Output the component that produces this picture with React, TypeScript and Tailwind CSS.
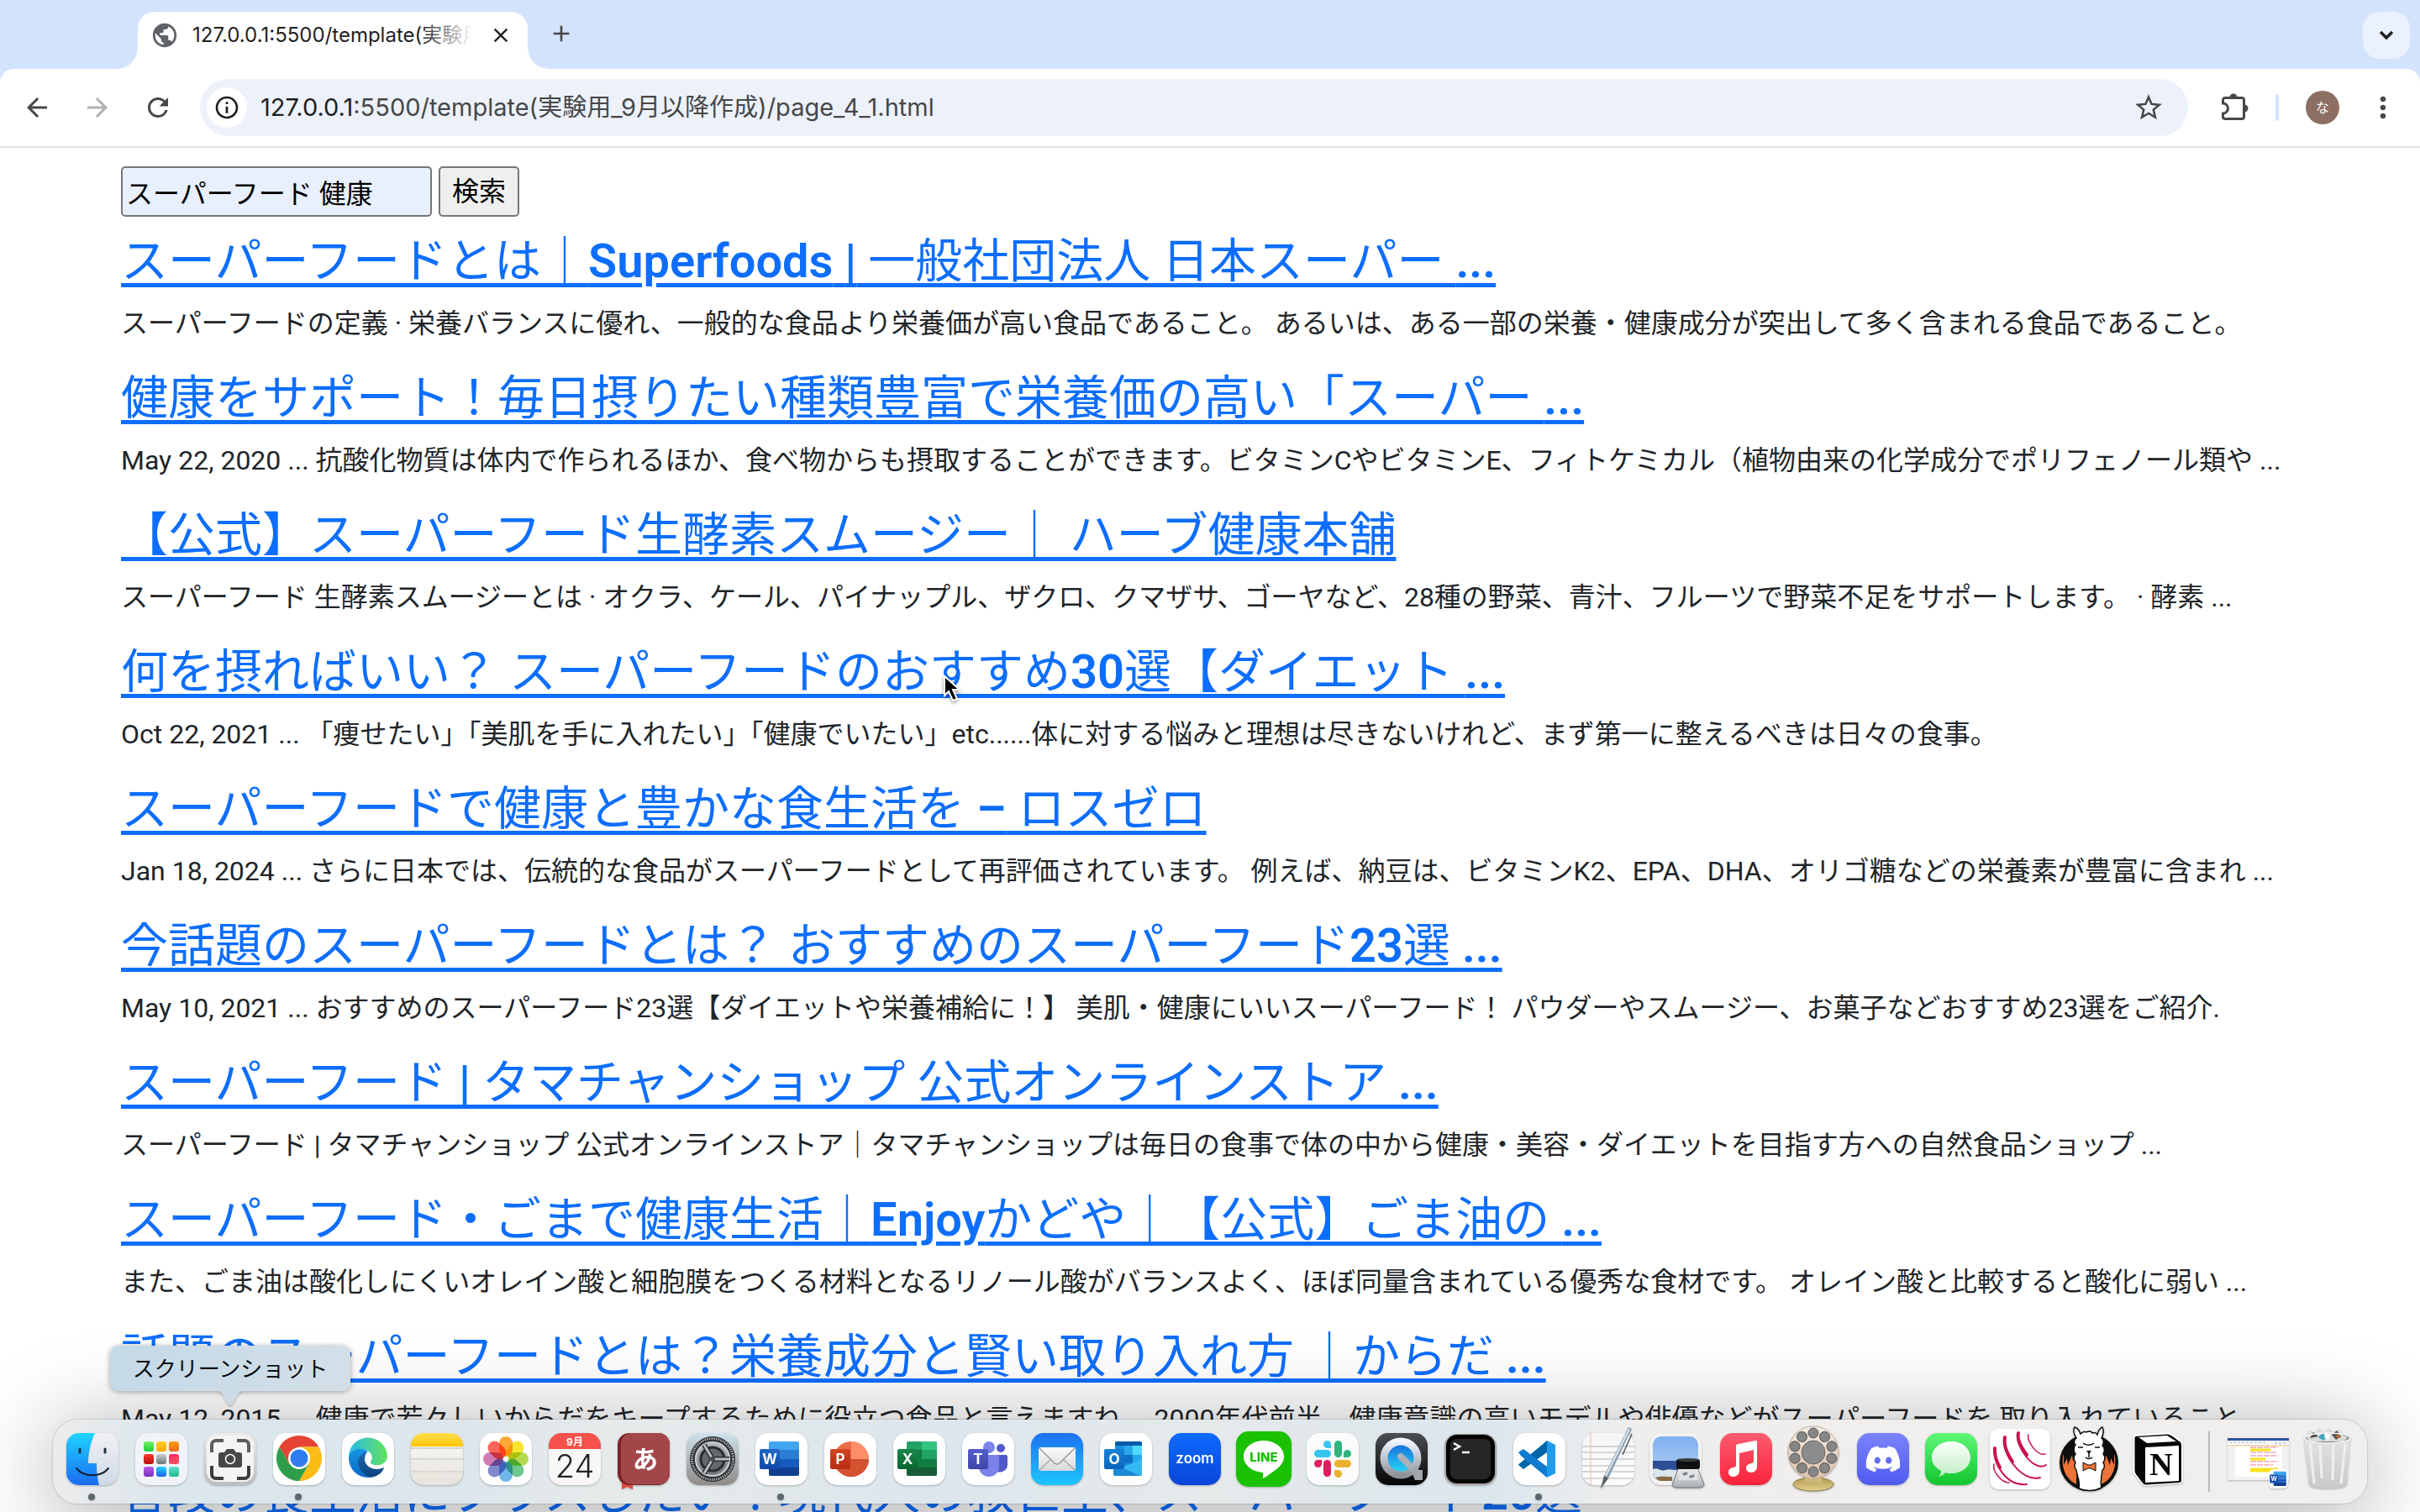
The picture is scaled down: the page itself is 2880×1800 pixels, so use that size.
import React from "react";
import {
  MdAdd,
  MdArrowBack,
  MdArrowForward,
  MdClose,
  MdInfoOutline,
  MdMoreVert,
  MdPublic,
  MdRefresh,
  MdStarOutline,
} from "react-icons/md";
import { FaDiscord } from "react-icons/fa";

const results = [
  {
    title: "スーパーフードとは｜Superfoods | 一般社団法人 日本スーパー ...",
    text: "スーパーフードの定義 · 栄養バランスに優れ、一般的な食品より栄養価が高い食品であること。 あるいは、ある一部の栄養・健康成分が突出して多く含まれる食品であること。",
  },
  {
    title: "健康をサポート！毎日摂りたい種類豊富で栄養価の高い「スーパー ...",
    text: "May 22, 2020 ... 抗酸化物質は体内で作られるほか、食べ物からも摂取することができます。ビタミンCやビタミンE、フィトケミカル（植物由来の化学成分でポリフェノール類や ...",
  },
  {
    title: "【公式】スーパーフード生酵素スムージー｜ ハーブ健康本舗",
    text: "スーパーフード 生酵素スムージーとは · オクラ、ケール、パイナップル、ザクロ、クマザサ、ゴーヤなど、28種の野菜、青汁、フルーツで野菜不足をサポートします。 · 酵素 ...",
  },
  {
    title: "何を摂ればいい？ スーパーフードのおすすめ30選【ダイエット ...",
    text: "Oct 22, 2021 ... 「痩せたい」「美肌を手に入れたい」「健康でいたい」etc......体に対する悩みと理想は尽きないけれど、まず第一に整えるべきは日々の食事。",
  },
  {
    title: "スーパーフードで健康と豊かな食生活を – ロスゼロ",
    text: "Jan 18, 2024 ... さらに日本では、伝統的な食品がスーパーフードとして再評価されています。 例えば、納豆は、ビタミンK2、EPA、DHA、オリゴ糖などの栄養素が豊富に含まれ ...",
  },
  {
    title: "今話題のスーパーフードとは？ おすすめのスーパーフード23選 ...",
    text: "May 10, 2021 ... おすすめのスーパーフード23選【ダイエットや栄養補給に！】 美肌・健康にいいスーパーフード！ パウダーやスムージー、お菓子などおすすめ23選をご紹介.",
  },
  {
    title: "スーパーフード | タマチャンショップ 公式オンラインストア ...",
    text: "スーパーフード | タマチャンショップ 公式オンラインストア｜タマチャンショップは毎日の食事で体の中から健康・美容・ダイエットを目指す方への自然食品ショップ ...",
  },
  {
    title: "スーパーフード・ごまで健康生活｜Enjoyかどや｜【公式】ごま油の ...",
    text: "また、ごま油は酸化しにくいオレイン酸と細胞膜をつくる材料となるリノール酸がバランスよく、ほぼ同量含まれている優秀な食材です。 オレイン酸と比較すると酸化に弱い ...",
  },
  {
    title: "話題のスーパーフードとは？栄養成分と賢い取り入れ方 ｜からだ ...",
    text: "May 12, 2015 ... 健康で若々しいからだをキープするために役立つ食品と言えますね。 2000年代前半、健康意識の高いモデルや俳優などがスーパーフードを 取り入れていること",
  },
  {
    title: "普段の食生活にプラスしたい！現代人の救世主、スーパーフード20選",
    text: "",
  },
];

/* Latin runs of a heading are set heavier than the Japanese around them. */
function HeadingText({ text }: { text: string }) {
  return (
    <>
      {text.split(/([A-Za-z0-9|.–]+)/).map((part, i) =>
        i % 2 ? (
          <span key={i} className="font-semibold">{part}</span>
        ) : (
          part
        ),
      )}
    </>
  );
}

/* ---------- drawing helpers for the dock ---------- */

function Grad({ id, a, b, h }: { id: string; a: string; b: string; h?: boolean }) {
  return (
    <linearGradient id={id} x1="0" y1="0" x2={h ? "1" : "0"} y2={h ? "0" : "1"}>
      <stop offset="0" stopColor={a} />
      <stop offset="1" stopColor={b} />
    </linearGradient>
  );
}

function Tile({ fill = "#fff" }: { fill?: string }) {
  return <rect x="10" y="16" width="62" height="62" rx="15" fill={fill} />;
}

function Label({
  x,
  y,
  size,
  children,
  fill = "#fff",
  weight = 700,
  family = "Inter, 'Noto Sans CJK JP', sans-serif",
}: {
  x: number;
  y: number;
  size: number;
  children: React.ReactNode;
  fill?: string;
  weight?: number;
  family?: string;
}) {
  return (
    <text x={x} y={y} fontSize={size} fill={fill} fontWeight={weight} fontFamily={family} textAnchor="middle">
      {children}
    </text>
  );
}

const Finder = () => (
  <>
    <Grad id="fi1" a="#1fd3ff" b="#1b6cf2" />
    <Grad id="fi2" a="#f1f1f4" b="#cfd9e6" />
    <clipPath id="fic">
      <rect x="10" y="16" width="62" height="62" rx="15" />
    </clipPath>
    <Tile fill="url(#fi2)" />
    <path clipPath="url(#fic)" d="M10 16H44C39 27 36 40 36 52H46C46 62 47 71 49 78H10Z" fill="url(#fi1)" />
    <path d="M26 35v4M56 35v4" stroke="#22303f" strokeWidth="3" strokeLinecap="round" />
    <path d="M22 58c9 11 29 11 38 0" fill="none" stroke="#16202c" strokeWidth="2" strokeLinecap="round" />
  </>
);

const padColors = [
  ["#7bf06a", "#17cf3a"], ["#ffd21f", "#fda50b"], ["#ff9f0a", "#ea6a22"],
  ["#fb3a30", "#b80f0f"], ["#c8d2d8", "#6c7276"], ["#ff2d6b", "#f9505c"],
  ["#bb5ae8", "#7b2fb8"], ["#1fd6ff", "#1d62ee"], ["#5ee0d2", "#23b98a"],
];
const Launchpad = () => (
  <>
    <Tile fill="#f0f4f8" />
    {padColors.map(([a, b], i) => (
      <g key={i}>
        <Grad id={`lp${i}`} a={a} b={b} />
        <rect x={20 + (i % 3) * 15} y={26 + Math.floor(i / 3) * 15} width="12" height="12" rx="3" fill={`url(#lp${i})`} />
      </g>
    ))}
  </>
);

const Screenshot = () => (
  <>
    <Grad id="ss1" a="#ececec" b="#bdbdbd" />
    <Tile fill="url(#ss1)" />
    <rect x="13" y="19" width="56" height="55" rx="12" fill="#f4f4f4" />
    <g fill="none" stroke="#3c3c3c" strokeWidth="4">
      <path d="M19 39v-9a5 5 0 0 1 5-5h9M49 25h9a5 5 0 0 1 5 5v9" stroke="#5c5c5c" />
      <path d="M19 55v10a5 5 0 0 0 5 5h9M49 70h9a5 5 0 0 0 5-5v-10" />
    </g>
    <path d="M30 39h4l3-4h8l3 4h4a3 3 0 0 1 3 3v12a3 3 0 0 1-3 3h-22a3 3 0 0 1-3-3v-12a3 3 0 0 1 3-3z" fill="#474747" />
    <circle cx="41" cy="47" r="5.5" fill="#474747" stroke="#fff" strokeWidth="1.5" />
  </>
);

const Chrome = () => (
  <>
    <Tile />
    <g transform="translate(41 46)">
      <path d="M-23.4-13.5A27 27 0 0 1 23.4-13.5H0L-11.7 6.75Z" fill="#e54335" />
      <path d="M23.4-13.5A27 27 0 0 1 0 27L11.7 6.75L0-13.5Z" fill="#fbbc15" />
      <path d="M0 27A27 27 0 0 1-23.4-13.5L-11.7 6.75L11.7 6.75Z" fill="#2e9e4b" />
      <circle r="13" fill="#fff" />
      <circle r="10.5" fill="#2f7bf0" />
    </g>
  </>
);

const Edge = () => (
  <>
    <Grad id="ed1" a="#2bb9ea" b="#62e35c" h />
    <Grad id="ed2" a="#1497e6" b="#0c66c4" />
    <Grad id="ed3" a="#1b6bb0" b="#0b4180" />
    <Tile />
    <path d="M18 46A23 23 0 0 1 64 43c0 8-7 12-13 11-5 0-8-2-7-4 3-4 2-8-1-11-6-6-17-4-25 7z" fill="url(#ed1)" />
    <path d="M18 46C19 36 31 31 41 38C33 42 34 54 42 58C48 61 55 60 60 57C56 65 49 69 41 69A23 23 0 0 1 18 46z" fill="url(#ed2)" />
    <path d="M40 38c-10 3-13 11-10 18 4 9 12 14 18 12 6-2 11-6 12-11-10 5-22 0-23-9 0-4 1-7 3-10z" fill="url(#ed3)" />
  </>
);

const Notes = () => (
  <>
    <Grad id="no1" a="#f9f9f8" b="#e7e3dc" />
    <Grad id="no2" a="#fedf52" b="#fdc406" />
    <clipPath id="noc">
      <rect x="10" y="16" width="62" height="62" rx="15" />
    </clipPath>
    <g clipPath="url(#noc)">
      <rect x="10" y="16" width="62" height="62" fill="url(#no1)" />
      <rect x="10" y="16" width="62" height="16" fill="url(#no2)" />
      <path d="M10 34H72" stroke="#b9b5ab" strokeWidth="2" strokeDasharray="1 1" />
      <path d="M10 47H72M10 62H72" stroke="#d9d8d6" strokeWidth="2" />
    </g>
  </>
);

const petals = ["#ff9a18", "#f5e00a", "#a3d32f", "#55bd7b", "#55a9e8", "#6a74c4", "#c565a8", "#fb4a3e"];
const Photos = () => (
  <>
    <Tile />
    {petals.map((c, i) => (
      <rect key={c} x="33" y="20" width="16" height="24" rx="8" fill={c} opacity="0.85" className="mix-blend-multiply" transform={`rotate(${i * 45} 41 47)`} />
    ))}
  </>
);

const Calendar = () => (
  <>
    <Tile fill="#f8f7f6" />
    <path d="M10 35V31A15 15 0 0 1 25 16H57A15 15 0 0 1 72 31V35Z" fill="#f6514b" />
    <Label x={41} y={31} size={12}>9月</Label>
    <Label x={41} y={69} size={38} fill="#222" weight={300}>24</Label>
  </>
);

const Dictionary = () => (
  <>
    <path d="M15 74h13v9l-6.500-3-6.500 3z" fill="#e0483e" />
    <rect x="10" y="16" width="62" height="62" rx="14" fill="#7c2526" />
    <rect x="14" y="16" width="58" height="61" rx="13" fill="#a3464a" />
    <Label x={43} y={58} size={30} weight={600} family="'Noto Sans CJK JP', sans-serif">あ</Label>
  </>
);

const Settings = () => (
  <>
    <Grad id="se1" a="#cfe2ec" b="#8f8b88" />
    <Grad id="se2" a="#b9bec2" b="#6f7070" />
    <Tile fill="url(#se1)" />
    <circle cx="41" cy="47" r="27" fill="#26282a" />
    <circle cx="41" cy="47" r="24.500" fill="none" stroke="#a8acae" strokeWidth="3" strokeDasharray="1.500 1.200" />
    <circle cx="41" cy="47" r="20" fill="url(#se2)" stroke="#c3c8cb" strokeWidth="2.500" />
    <circle cx="41" cy="47" r="14" fill="#66696b" stroke="#2b2d2f" strokeWidth="3" />
    <path d="M41 47H61M41 47L31 30M41 47L31 64" stroke="#2b2d2f" strokeWidth="6" />
    <path d="M41 47H61M41 47L31 30M41 47L31 64" stroke="#b5bbbe" strokeWidth="3" />
    <circle cx="41" cy="47" r="3" fill="#4a4d4f" />
  </>
);

function OfficeBadge({ id, a, b, x, letter }: { id: string; a: string; b: string; x: number; letter: string }) {
  return (
    <>
      <Grad id={id} a={a} b={b} />
      <rect x={x} y="35" width="24" height="24" rx="2" fill={`url(#${id})`} />
      <Label x={x + 12} y={53} size={17}>{letter}</Label>
    </>
  );
}

const WordArt = () => (
  <>
    <path d="M28 26h32a2 2 0 0 1 2 2v9H26v-9a2 2 0 0 1 2-2z" fill="#41a5ee" />
    <rect x="26" y="36" width="36" height="11" fill="#2b7cd3" />
    <rect x="26" y="47" width="36" height="10" fill="#185abd" />
    <path d="M26 57h36v8a2 2 0 0 1-2 2H28a2 2 0 0 1-2-2z" fill="#103f91" />
  </>
);
const Word = () => (
  <>
    <Tile />
    <WordArt />
    <OfficeBadge id="wd1" a="#2368c4" b="#0f48a8" x={15} letter="W" />
  </>
);

const PowerPoint = () => (
  <>
    <Tile />
    <circle cx="42" cy="47" r="21" fill="#ed6c47" />
    <path d="M42 26a21 21 0 0 1 21 21H42z" fill="#ff8f6b" />
    <path d="M63 47a21 21 0 0 1-42 0z" fill="#d35230" />
    <OfficeBadge id="pp1" a="#d04524" b="#b92b10" x={17} letter="P" />
  </>
);

const Excel = () => (
  <>
    <Tile />
    <rect x="26" y="26" width="36" height="41" rx="2" fill="#21a366" />
    <path d="M44 26h16a2 2 0 0 1 2 2v8H44z" fill="#33c481" />
    <rect x="26" y="36" width="18" height="21" fill="#107c41" />
    <path d="M44 47h18v10H44z" fill="#107c41" />
    <path d="M26 57h36v8a2 2 0 0 1-2 2H28a2 2 0 0 1-2-2z" fill="#185c37" />
    <OfficeBadge id="xl1" a="#18884a" b="#0b6630" x={15} letter="X" />
  </>
);

const Teams = () => (
  <>
    <Tile />
    <circle cx="56" cy="34" r="5" fill="#5059c9" />
    <path d="M48 42h14a2 2 0 0 1 2 2v10a9 9 0 0 1-16 5z" fill="#5059c9" />
    <circle cx="42" cy="33" r="7" fill="#7b83eb" />
    <path d="M30 42h22a2 2 0 0 1 2 2v12a12 12 0 0 1-24 0z" fill="#7b83eb" />
    <OfficeBadge id="te1" a="#5560cc" b="#3d45a8" x={17} letter="T" />
  </>
);

const Mail = () => (
  <>
    <Grad id="ma1" a="#1d72f3" b="#1ec5fd" />
    <Grad id="ma2" a="#fbfbfb" b="#d9d9d9" />
    <Tile fill="url(#ma1)" />
    <rect x="19" y="33" width="44" height="28" rx="3" fill="url(#ma2)" />
    <path d="M20 60l14-13M62 60L48 47" stroke="#a9a9a9" strokeWidth="1.500" />
    <path d="M20 34l17 17c3 3 5 3 8 0l17-17" fill="none" stroke="#9b9b9b" strokeWidth="1.500" />
  </>
);

const Outlook = () => (
  <>
    <Tile />
    <path d="M30 26h28a2 2 0 0 1 2 2v38H28V28a2 2 0 0 1 2-2z" fill="#1490df" />
    <path d="M30 26h28a2 2 0 0 1 2 2v3H28v-3a2 2 0 0 1 2-2z" fill="#0a5ba8" />
    <rect x="39" y="31" width="10" height="11" fill="#28a8ea" />
    <rect x="49" y="31" width="11" height="11" fill="#50d9ff" />
    <rect x="39" y="42" width="10" height="10" fill="#0f6fc6" />
    <rect x="49" y="42" width="11" height="10" fill="#28a8ea" />
    <path d="M26 48l17 8 17-8v17a2 2 0 0 1-2 2H28a2 2 0 0 1-2-2z" fill="#1b8ad6" />
    <path d="M60 47v18a2 2 0 0 1-2 2L36 57z" fill="#35b8f1" />
    <OfficeBadge id="ol1" a="#1784d8" b="#0a63b8" x={15} letter="O" />
  </>
);

const Zoom = () => (
  <>
    <Grad id="zo1" a="#0d6bff" b="#0a45d8" />
    <Tile fill="url(#zo1)" />
    <Label x={41} y={52} size={17} weight={600}>zoom</Label>
  </>
);

const Line = () => (
  <>
    <rect x="8" y="14" width="66" height="66" rx="15" fill="#19c100" />
    <path d="M41 25c14 0 24 9 24 19 0 9-8 15-16 20-3 3-7 5-9 6-1-2 1-4 0-7-13-1-23-9-23-19 0-10 10-19 24-19z" fill="#fff" />
    <Label x={41} y={50} size={15} fill="#19c100" weight={800}>LINE</Label>
  </>
);

const Slack = () => (
  <>
    <Tile fill="#fbfbfc" />
    <g fill="#36c5f0">
      <rect x="19" y="36" width="20" height="9" rx="4.500" />
      <path d="M39 34h-4.500a4.500 4.500 0 1 1 4.500-4.500z" />
    </g>
    <g fill="#2eb67d">
      <rect x="43" y="25" width="9" height="20" rx="4.500" />
      <path d="M54 45v-4.500a4.500 4.500 0 1 1 4.500 4.500z" />
    </g>
    <g fill="#ecb22e">
      <rect x="43" y="48" width="20" height="9" rx="4.500" />
      <path d="M43 60h4.500a4.500 4.500 0 1 1-4.500 4.500z" />
    </g>
    <g fill="#e01e5a">
      <rect x="30" y="48" width="9" height="20" rx="4.500" />
      <path d="M28 48v4.500a4.500 4.500 0 1 1-4.500-4.500z" />
    </g>
  </>
);

const QuickTime = () => (
  <>
    <Grad id="qt1" a="#4b4e52" b="#050505" />
    <Grad id="qt2" a="#1565d8" b="#27e0f8" />
    <Grad id="qt3" a="#eef3ff" b="#8e9499" />
    <Tile fill="url(#qt1)" />
    <circle cx="40" cy="46" r="20" fill="url(#qt2)" stroke="url(#qt3)" strokeWidth="9" />
    <path d="M40 44L58 62" stroke="#a9b0b8" strokeWidth="8" strokeLinecap="round" />
    <path d="M52 60l8-6 1 6h5v12h-9z" fill="#a0a6ac" />
  </>
);

const Terminal = () => (
  <>
    <rect x="10" y="17" width="62" height="61" rx="15" fill="#a9a3a0" />
    <rect x="12" y="18" width="58" height="58" rx="13" fill="#050505" />
    <rect x="17" y="23" width="48" height="48" rx="8" fill="#262626" />
    <path d="M21 28l7 4-7 4M31 39h9" fill="none" stroke="#fff" strokeWidth="2.500" />
  </>
);

const VSCode = () => (
  <>
    <Tile />
    <path d="M50 25V39L22 59L16 54Q17 52 19 51z" fill="#0065a9" />
    <path d="M16 39L22 35L50 56V69L19 43z" fill="#0e7ad0" />
    <path d="M50 25L60 30V64L50 69z" fill="#1f9cf0" />
  </>
);

const TextEdit = () => (
  <>
    <Grad id="tx1" a="#f5f5f5" b="#fdfdfd" />
    <Tile fill="url(#tx1)" />
    <path d="M10 32H72M10 39H72M10 47H72M10 55H72M10 62H72M12 70H70" stroke="#c9c9c9" strokeWidth="1.500" />
    <path d="M20 16V78" stroke="#f3b6b0" strokeWidth="1" />
    <path d="M65 9l4 2-28 59-9 12 4-15z" fill="#8fa3b4" />
    <path d="M66 11l-28 56" stroke="#dbe7ee" strokeWidth="2" />
    <path d="M69 17L58 42" stroke="#4b5a66" strokeWidth="1.500" />
    <path d="M36 67l5 3-9 12z" fill="#5d6063" />
  </>
);

const Preview = () => (
  <>
    <Grad id="pv1" a="#7fb0ef" b="#b7d2f0" />
    <Grad id="pv2" a="#f6f7f8" b="#a7abae" />
    <rect x="8" y="16" width="62" height="62" rx="14" fill="#f2f2f2" />
    <rect x="12" y="20" width="54" height="53" rx="10" fill="url(#pv1)" />
    <path d="M12 49H66V63A10 10 0 0 1 56 73H22A10 10 0 0 1 12 63z" fill="#2d4f96" />
    <path d="M12 59c6-3 9 3 15 1s10 1 18 0v13H22a10 10 0 0 1-10-10z" fill="#d9e4ec" />
    <path d="M15 69c6-2 12-1 20-1v5H22c-3 0-5-2-7-4z" fill="#8a6a43" />
    <path d="M43 57h22l8 20c0 3-3 4-6 4H41c-3 0-6-1-6-4z" fill="url(#pv2)" stroke="#707478" strokeWidth="1" />
    <path d="M45 60h18l3 12H42z" fill="#dfe3e5" />
    <path d="M47 64l5-2 2 3-5 2zM55 67l6-2 1 3-6 2z" fill="#7b858d" />
    <rect x="40" y="47" width="28" height="12" rx="3" fill="#101010" />
    <ellipse cx="54" cy="48" rx="13" ry="2" fill="#3a3a3a" />
  </>
);

const Music = () => (
  <>
    <Grad id="mu1" a="#fc5c6f" b="#fa233b" />
    <Tile fill="url(#mu1)" />
    <path d="M29 32c0-2 1-3 3-3l20-4c1 0 2 0 2 2v29c0 4-3 7-7 7-3 0-6-2-6-5 0-4 3-5 6-6 2 0 3-1 3-3V36l-17 4v21c0 4-3 7-7 7-3 0-6-2-6-5 0-4 3-6 6-6 2-1 3-1 3-3z" fill="#fff" />
  </>
);

const Rotary = () => (
  <>
    <Grad id="ro1" a="#f6efe8" b="#dcc2ad" />
    <Grad id="ro2" a="#b39a54" b="#e2d08c" />
    <ellipse cx="39" cy="77" rx="24" ry="8" fill="url(#ro2)" stroke="#8c7a45" strokeWidth="1" />
    <path d="M30 66h18l2 9H28z" fill="#cdb77c" />
    <ellipse cx="39" cy="39" rx="30" ry="31" fill="url(#ro1)" stroke="#c4ad9b" strokeWidth="1" />
    <circle cx="39" cy="39" r="14" fill="#8b8b8b" stroke="#6d6a66" strokeWidth="1" />
    {Array.from({ length: 10 }, (_, i) => (
      <circle key={i} cx="39" cy="16" r="6" fill="#868686" stroke="#5f5c58" strokeWidth="1" transform={`rotate(${i * 36} 39 39)`} />
    ))}
  </>
);

const Discord = () => (
  <>
    <Grad id="di1" a="#7a83fb" b="#4f5bf0" />
    <rect x="9" y="16" width="62" height="62" rx="15" fill="url(#di1)" />
    <FaDiscord x={18} y={25} size={44} color="#fff" />
  </>
);

const Messages = () => (
  <>
    <Grad id="me1" a="#5ff777" b="#12c52e" />
    <Grad id="me2" a="#fbfffb" b="#c2edc4" />
    <rect x="8" y="16" width="62" height="62" rx="15" fill="url(#me1)" />
    <path d="M39 26c13 0 23 8 23 19s-10 19-23 19c-3 0-5 0-7-1-2 3-5 4-8 5 2-2 3-4 3-7-7-4-11-9-11-16 0-11 10-19 23-19z" fill="url(#me2)" />
  </>
);

const Arcs = () => (
  <>
    <rect x="3" y="11" width="72" height="72" rx="10" fill="#fff" />
    <g fill="none" stroke="#c9134f" strokeLinecap="round">
      <path d="M9 34c-3 18 14 46 38 43" strokeWidth="2" />
      <path d="M9 34c-1 9 2 16 6 23" strokeWidth="4" />
      <path d="M21 21c-6 17 20 55 42 48" strokeWidth="2" />
      <path d="M21 21c-2 10 3 20 9 29" strokeWidth="4" />
      <path d="M37 16c-6 12 18 48 33 38" strokeWidth="2" />
      <path d="M37 16c-2 8 4 18 10 26" strokeWidth="4" />
      <path d="M49 18c-3 6 10 26 20 23" strokeWidth="1.500" />
      <path d="M8 53c-2 8 8 22 18 22" strokeWidth="1.500" />
    </g>
  </>
);

const Alpaca = () => (
  <>
    <ellipse cx="39" cy="51" rx="35" ry="34" fill="#0d0d0d" />
    <path d="M9 40c-4 14 1 30 15 37V36l-4 14-1-8-5 12-1-8-4 8z" fill="#ee7338" />
    <path d="M69 40c4 14-1 30-15 37V36l4 14 1-8 5 12 1-8 4 8z" fill="#ee7338" />
    <path d="M27 82c2-8-2-14-3-22-3-3-2-7-1-9-3-3-2-8 0-10-3-3-2-9 0-11-3-3-1-7 1-8-3-5-4-10-2-13 4 1 6 5 7 8 3-3 6-3 7-2 3-2 6-1 7 1 3-1 5 0 6 2 1-4 3-8 6-9 2 4 1 9-1 13 3 2 3 6 1 9 3 2 3 7 1 10 3 3 2 8 0 10 2 3 2 7-1 9-1 8-3 15-1 21-7 4-19 5-27 1z" fill="#fff" stroke="#0d0d0d" strokeWidth="1.500" />
    <path d="M26 33h6M46 33h6M32 28c3 3 10 3 13 0M39 40v5M35 45c2 2 6 2 8 0" fill="none" stroke="#0d0d0d" strokeWidth="1.500" />
    <path d="M36 37h6l-3 4z" fill="#0d0d0d" />
    <path d="M32 51l6 3h3l6-3v10l-6-3h-3l-6 3z" fill="#ee7338" stroke="#0d0d0d" strokeWidth="1" />
  </>
);

const Notion = () => (
  <>
    <path d="M10 20l2-3 41-2 4 2 12 9v47l-3 3-43 3-3-2L9 62z" fill="#fff" />
    <path d="M12 20l38-2.500q3 0 5 1.500l11 8q1 1 1 3v42q0 3-3 3l-39 2.500q-3 0-4.500-2.500l-7.500-10q-1.500-2-1.500-5V22q0-2 1.500-2z" fill="#050505" />
    <path d="M16 21l34-2 11 7-35 2z" fill="#fff" />
    <path d="M24 33l40-2v42l-40 2z" fill="#fff" />
    <Label x={43} y={66} size={38} fill="#050505" family="'Liberation Serif', serif">N</Label>
  </>
);

const MinimizedWindow = () => (
  <>
    <rect x="4" y="22" width="73" height="50" fill="#f1f1f1" />
    <rect x="4" y="22" width="73" height="3" fill="#2b579a" />
    <rect x="4" y="25" width="73" height="5" fill="#f7f7f7" />
    <path d="M5 31H77" stroke="#ecd9a0" strokeWidth="1.500" />
    <path d="M6 27H50M60 28H74" stroke="#9cb3d4" strokeWidth="1" strokeDasharray="3 2" />
    <rect x="13" y="32" width="56" height="36" fill="#fff" />
    <path d="M31 33H64M31 39H62M31 43H64M31 50H64M31 54H58" stroke="#f6a9bd" strokeWidth="1.500" strokeDasharray="7 1" />
    <path d="M31 36H55M31 47H49M31 59H64M31 61H55" stroke="#f7e41f" strokeWidth="3" />
    <rect x="53" y="59" width="23" height="23" rx="6" fill="#fff" />
    <svg x="52" y="57" width="26" height="27" viewBox="10 16 62 62">
      <WordArt />
      <rect x="15" y="35" width="24" height="24" rx="2" fill="#1450b0" />
      <Label x={27} y={53} size={17}>W</Label>
    </svg>
  </>
);

const Trash = () => (
  <>
    <Grad id="tr1" a="#e2e2e2" b="#c9c9c9" />
    <path d="M13 22L19 77q1 5 22 5t23-5L68 22z" fill="url(#tr1)" />
    <path d="M20 28l5 48M62 28l-5 48M32 30l2 40M48 30l-1 42" stroke="#efefef" strokeWidth="3" />
    <ellipse cx="41" cy="22" rx="27" ry="6" fill="#8f8f8f" />
    <path d="M16 22l3-9 7 3 5-6 6 5 6-5 5 5 7-3 4 7 6 2-5 5H20z" fill="#dcdcdc" />
    <path d="M20 22l4-7 6 5zM46 18l6-5 5 7-6 4z" fill="#53504e" />
    <path d="M30 21l5-5 5 5-4 4z" fill="#3fa7b8" />
    <path d="M50 21l4-4 3 5z" fill="#c6653a" />
    <path d="M39 15l5 4-2 5-5-3z" fill="#fff" />
    <ellipse cx="41" cy="22" rx="27" ry="6" fill="none" stroke="#f4f4f4" strokeWidth="1.500" />
  </>
);

const dock: { name: string; art: React.FC; running?: boolean }[] = [
  { name: "Finder", art: Finder, running: true },
  { name: "Launchpad", art: Launchpad },
  { name: "スクリーンショット", art: Screenshot },
  { name: "Google Chrome", art: Chrome, running: true },
  { name: "Microsoft Edge", art: Edge },
  { name: "メモ", art: Notes },
  { name: "写真", art: Photos },
  { name: "カレンダー", art: Calendar },
  { name: "辞書", art: Dictionary },
  { name: "システム設定", art: Settings },
  { name: "Word", art: Word, running: true },
  { name: "PowerPoint", art: PowerPoint },
  { name: "Excel", art: Excel },
  { name: "Teams", art: Teams },
  { name: "メール", art: Mail },
  { name: "Outlook", art: Outlook },
  { name: "Zoom", art: Zoom },
  { name: "LINE", art: Line },
  { name: "Slack", art: Slack },
  { name: "QuickTime Player", art: QuickTime },
  { name: "ターミナル", art: Terminal },
  { name: "Visual Studio Code", art: VSCode, running: true },
  { name: "テキストエディット", art: TextEdit },
  { name: "プレビュー", art: Preview },
  { name: "ミュージック", art: Music },
  { name: "Rotary", art: Rotary },
  { name: "Discord", art: Discord },
  { name: "メッセージ", art: Messages },
  { name: "Arcs", art: Arcs },
  { name: "Alpaca", art: Alpaca },
  { name: "Notion", art: Notion },
];

function DockItem({ name, running, art: Art }: { name: string; running?: boolean; art: React.FC }) {
  return (
    <button aria-label={name} className="block h-[100px] w-[82px] shrink-0">
      <svg viewBox="0 0 82 100" className="h-full w-full drop-shadow-[0_1px_1px_rgba(0,0,0,0.25)]">
        <Art />
        {running && <circle cx="40" cy="92" r="4" fill="#5b686e" />}
      </svg>
    </button>
  );
}

function Dock() {
  return (
    <nav
      aria-label="Dock"
      className="absolute bottom-[10px] left-1/2 flex h-[100px] -translate-x-1/2 rounded-[30px] bg-[linear-gradient(90deg,#ececec_0%,#dbe6ed_5%,#dde6ec_18%,#e6eaea_24%,#dde6ed_38%,#e5e9ea_50%,#dbe6ed_62%,#efeeed_68%,#f0efee_100%)] px-1.5 shadow-[0_14px_110px_rgba(0,0,0,0.36),0_0_2px_rgba(0,0,0,0.4)]"
    >
      {dock.slice(0, 2).map((d) => (
        <DockItem key={d.name} {...d} />
      ))}
      <div className="relative">
        <DockItem {...dock[2]} />
        <div
          role="tooltip"
          className="absolute bottom-[134px] left-1/2 flex h-[54px] w-[286px] -translate-x-1/2 items-center justify-center rounded-[10px] bg-[linear-gradient(90deg,#c4d9e8,#d3dfe7)] text-[26px] whitespace-nowrap text-[#0b0f14] shadow-[0_1px_6px_rgba(0,0,0,0.35)]"
        >
          スクリーンショット
          <svg viewBox="0 0 32 19" className="absolute top-[53px] left-1/2 h-[19px] w-8 -translate-x-1/2 overflow-visible drop-shadow-[0_2px_1px_rgba(0,0,0,0.2)]">
            <path d="M0 0C5 1 7 5 9 9L14 17Q16 19 18 17L23 9C25 5 27 1 32 0Z" fill="#cbdce8" />
          </svg>
        </div>
      </div>
      {dock.slice(3).map((d) => (
        <DockItem key={d.name} {...d} />
      ))}
      <div className="flex w-9 items-center justify-center">
        <div className="h-[72px] w-0.5 bg-[#bababa]" />
      </div>
      <DockItem name="最小化したウインドウ" art={MinimizedWindow} />
      <DockItem name="ゴミ箱" art={Trash} />
    </nav>
  );
}

/* ---------- browser window ---------- */

function TabStrip() {
  return (
    <div className="flex h-[82px] shrink-0 items-end bg-[#d3e3fd] pr-3 pl-[164px]">
      <div className="relative flex h-[68px] w-[464px] items-start rounded-t-[20px] bg-white pt-[10px] pr-[14px] pl-[15px]">
        <span className="absolute bottom-0 -left-6 size-6 bg-[radial-gradient(circle_at_0_0,transparent_23px,#fff_24px)]" />
        <span className="absolute -right-6 bottom-0 size-6 bg-[radial-gradient(circle_at_100%_0,transparent_23px,#fff_24px)]" />
        <MdPublic className="mt-px size-[34px] shrink-0 text-[#5f6368]" />
        <span className="relative ml-4 h-9 flex-1 overflow-hidden text-[24px] leading-9 whitespace-nowrap text-[#1f1f1f]">
          127.0.0.1:5500/template(実験用
          <span className="absolute inset-y-0 right-0 w-[60px] bg-[linear-gradient(90deg,transparent,#fff)]" />
        </span>
        <button aria-label="タブを閉じる" className="ml-4 flex size-9 items-center justify-center text-[#1f1f1f]">
          <MdClose className="size-7" />
        </button>
      </div>
      <button aria-label="新しいタブ" className="mb-6 ml-[22px] flex size-9 items-center justify-center text-[#474747]">
        <MdAdd className="size-8" />
      </button>
      <button aria-label="タブを検索" className="mb-3 ml-auto flex size-14 items-center justify-center rounded-[20px] bg-[#ebf1fe]">
        <svg viewBox="0 0 18 12" className="h-3 w-[18px]">
          <path d="M2 2L9 9L16 2" fill="none" stroke="#1f1f1f" strokeWidth="3.500" />
        </svg>
      </button>
    </div>
  );
}

function Toolbar() {
  return (
    <div className="shrink-0 bg-[#d3e3fd]">
      <div className="flex h-[94px] items-center rounded-t-[16px] border-b-2 border-[#e1e1e1] bg-white pr-6 pl-[26px] text-[#474747]">
        <button aria-label="戻る"><MdArrowBack className="size-9" /></button>
        <button aria-label="進む" className="ml-9 text-[#b0b0b0]"><MdArrowForward className="size-9" /></button>
        <button aria-label="再読み込み" className="ml-9"><MdRefresh className="size-9" /></button>
        <div className="ml-8 flex h-[68px] flex-1 items-center rounded-full bg-[#ecf1fa] pr-7 pl-2">
          <span className="flex size-12 items-center justify-center rounded-full bg-white">
            <MdInfoOutline className="size-8 text-[#1f1f1f]" />
          </span>
          <span className="ml-4 flex-1 text-[29px] whitespace-nowrap text-[#474747]">
            <span className="text-[#1f1f1f]">127.0.0.1</span>:5500/template(実験用_9月以降作成)/page_4_1.html
          </span>
          <button aria-label="ブックマークに追加"><MdStarOutline className="size-[38px]" /></button>
        </div>
        <button aria-label="拡張機能" className="ml-9">
          <svg viewBox="0 0 36 36" className="size-9">
            <path d="M5.500 12V9a2.500 2.500 0 0 1 2.500-2.500h20A2.500 2.500 0 0 1 30.500 9v20a2.500 2.500 0 0 1-2.500 2.500H8A2.500 2.500 0 0 1 5.500 29v-4a6 6 0 0 0 0-12z" fill="none" stroke="currentColor" strokeWidth="3" />
            <path d="M13.500 6a4.500 4.500 0 0 1 9 0zM31 14.500a4.500 4.500 0 0 1 0 9z" fill="currentColor" />
          </svg>
        </button>
        <span className="ml-8 h-8 w-1 rounded-full bg-[#d3e3fd]" />
        <button aria-label="プロフィール" className="ml-8 flex size-10 items-center justify-center rounded-full bg-[#8d6e63] text-[16px] text-white">
          な
        </button>
        <button aria-label="メニュー" className="ml-8"><MdMoreVert className="size-10" /></button>
      </div>
    </div>
  );
}

export default function App() {
  return (
    <div className="relative flex h-screen flex-col overflow-hidden bg-white font-['Inter','Noto_Sans_CJK_JP',sans-serif]">
      <TabStrip />
      <Toolbar />
      <main className="mx-auto w-full max-w-[2640px] px-6 pt-[22px] font-['Roboto','Noto_Sans_CJK_JP',sans-serif]">
        <form className="mb-5 flex gap-2 text-[32px] text-black" onSubmit={(e) => e.preventDefault()}>
          <input
            aria-label="検索キーワード"
            defaultValue="スーパーフード 健康"
            className="h-[60px] w-[370px] rounded-[5px] border-2 border-[#767676] bg-[#e8f0fe] px-1"
          />
          <button className="h-[60px] w-24 rounded-[5px] border-2 border-[#767676] bg-[#efefef]">検索</button>
        </form>
        {results.map((r) => (
          <section key={r.title} className="mb-8 text-[#212529]">
            <h3 className="mb-4 text-[56px] leading-[67px] font-normal whitespace-nowrap">
              <a href="#" className="text-[#0d6efd] underline decoration-[5px] underline-offset-[7px]">
                <HeadingText text={r.title} />
              </a>
            </h3>
            <p className="text-[32px] leading-[48px] whitespace-nowrap">{r.text}</p>
          </section>
        ))}
      </main>
      <Dock />
      <svg viewBox="0 0 24 36" className="absolute top-[802px] left-[1121px] h-9 w-6 drop-shadow-[0_2px_2px_rgba(0,0,0,0.4)]">
        <path d="M3 3V26L8 21L13 32L18 30L13 19H21Z" fill="#000" stroke="#fff" strokeWidth="2" />
      </svg>
    </div>
  );
}
